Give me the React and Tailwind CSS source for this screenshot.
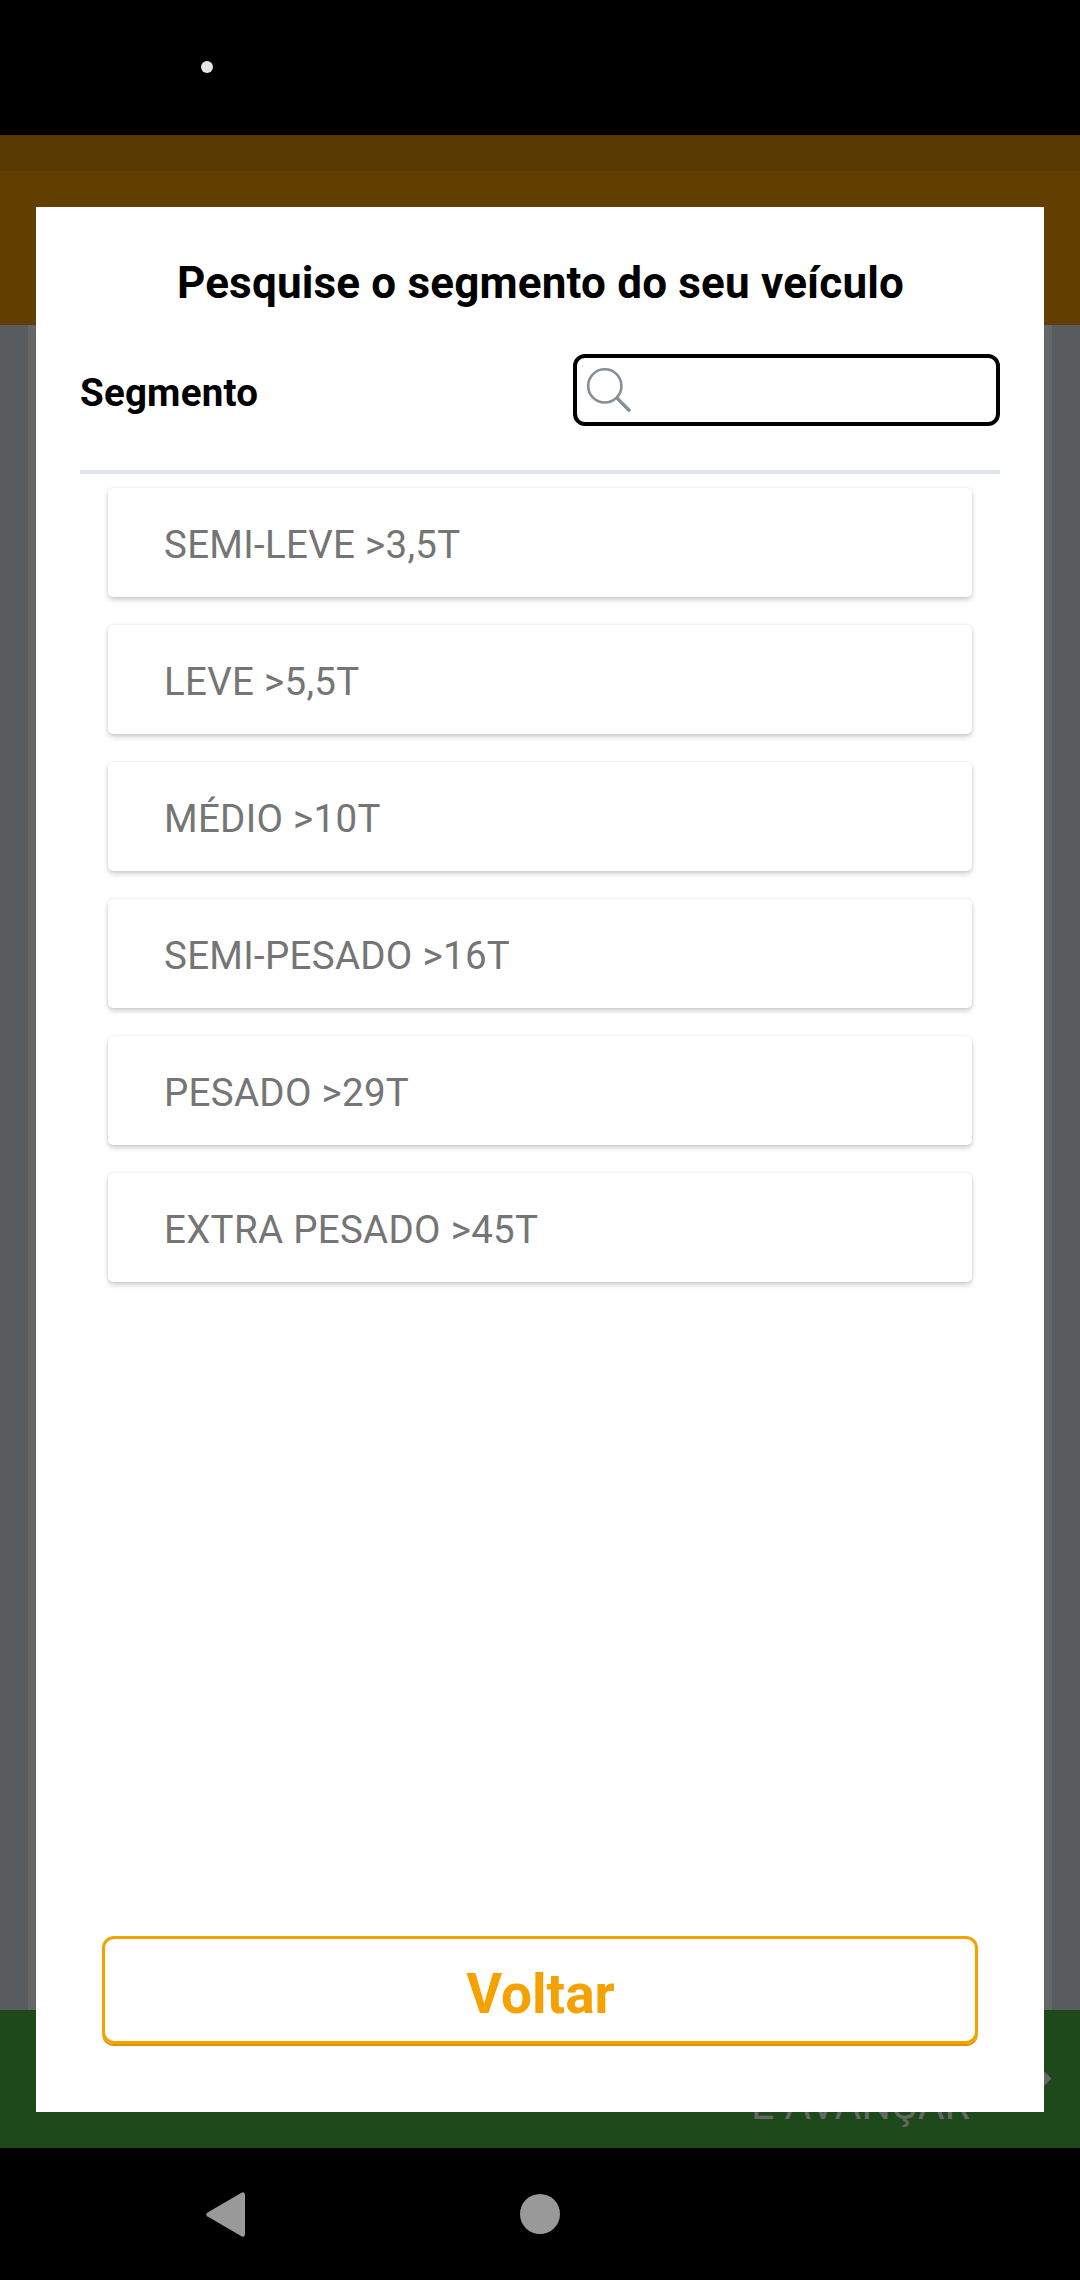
const segments = [
  "SEMI-LEVE >3,5T",
  "LEVE >5,5T",
  "MÉDIO >10T",
  "SEMI-PESADO >16T",
  "PESADO >29T",
  "EXTRA PESADO >45T",
];

function SearchIcon() {
  return (
    <svg className="size-12" viewBox="0 0 48 48" fill="none" stroke="#868e96">
      <circle cx="19.8" cy="19.9" r="16.6" strokeWidth="2.6" />
      <path d="M31.6 31.6 45 45.2" strokeWidth="3.4" />
    </svg>
  );
}

function Backdrop() {
  return (
    <div className="flex h-full flex-col">
      <div className="h-[36px] shrink-0 bg-[#593a03]" />
      <div className="h-[154px] shrink-0 bg-[#623f00]" />
      <div className="flex-1 bg-[#595c5e] px-7">
        <div className="h-full bg-[#666666]" />
      </div>
      <div className="flex h-[138px] shrink-0 items-end justify-end bg-[#1e491a] pr-[28px]">
        <span className="mb-[15px] mr-[60px] whitespace-nowrap text-[41.25px] leading-[56px] text-[#666666]">
          E AVANÇAR
        </span>
        <svg className="mb-[49px] h-[41px] w-[22px]" viewBox="0 0 22 41" fill="#666666">
          <path d="M1 0 21.5 20.5 1 41Z" />
        </svg>
      </div>
    </div>
  );
}

function SegmentDialog() {
  return (
    <div className="absolute inset-x-9 bottom-9 top-[72px] flex flex-col bg-white pt-[50px]">
      <h1 className="whitespace-nowrap pl-px text-center text-[44px] font-bold leading-[52px] tracking-[0.18px] text-black">
        Pesquise o segmento do seu veículo
      </h1>
      <div className="mx-11 mt-[45px] flex h-[120px] items-start justify-between border-b-4 border-[#dfe6eb]">
        <label className="pt-[5px] text-[38.5px] font-bold leading-[68px] tracking-[0.2px] text-black">Segmento</label>
        <div className="h-[72px] w-[427px] rounded-xl border-4 border-black pl-2 pt-2">
          <SearchIcon />
        </div>
      </div>
      <ul className="mx-[72px] mt-[14px] flex flex-col gap-7">
        {segments.map((name) => (
          <li
            key={name}
            className="h-[109px] rounded-[5px] bg-white pl-14 pt-[5px] text-[38.5px] leading-[104px] tracking-[0.3px] text-[#757575] shadow-[0_3px_5px_rgba(0,0,0,0.18),0_0_3px_rgba(0,0,0,0.1)]"
          >
            {name}
          </li>
        ))}
      </ul>
      <button className="mx-[66px] mb-[68px] mt-auto h-[108px] rounded-xl border-[3px] border-[#f5a100] pl-px pt-[8px] text-[55px] font-bold leading-[94px] text-[#f5a100] shadow-[0_2px_0_#e38f00]">
        Voltar
      </button>
    </div>
  );
}

export default function App() {
  return (
    <div className="flex h-[2280px] w-[1080px] flex-col overflow-hidden bg-black font-['Roboto',sans-serif]">
      <div className="h-[135px] shrink-0 pl-[201px] pt-[61px]">
        <div className="size-3 rounded-full bg-[#e6e6e6]" />
      </div>
      <div className="relative flex-1">
        <Backdrop />
        <SegmentDialog />
      </div>
      <div className="flex h-[132px] shrink-0 items-start pl-[206px] pt-[44px]">
        <svg className="h-[45px] w-[39px]" viewBox="0 0 39 45" fill="#999999">
          <path d="M1.2 20.8Q-.8 22.5 1.2 24.2L35.5 44.3Q39 46 39 42V3Q39-1 35.5.7Z" />
        </svg>
        <div className="ml-[275px] mt-[2px] size-10 rounded-full bg-[#999999]" />
      </div>
    </div>
  );
}
